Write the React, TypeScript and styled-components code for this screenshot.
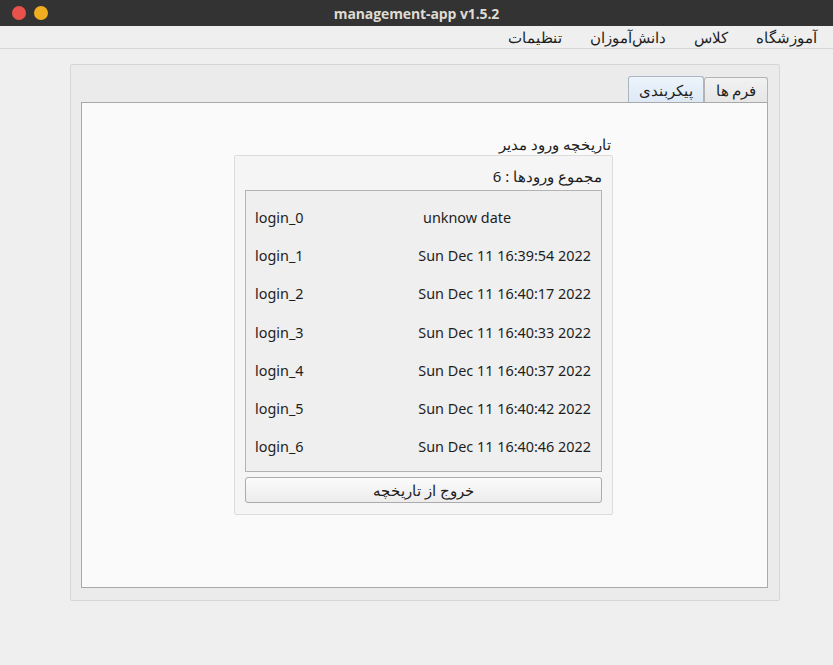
import styled, { createGlobalStyle } from 'styled-components';

const Global = createGlobalStyle`
  html, body { margin: 0; padding: 0; background: #efefef; }
  body { font-family: "Noto Sans", sans-serif; color: #1e1e1e; }
`;

const Window = styled.div`
  width: 833px;
  height: 665px;
  display: flex;
  flex-direction: column;
  background: #efefef;
  overflow: hidden;
`;

const TitleBar = styled.div`
  height: 26px;
  background: #333333;
  display: flex;
  align-items: center;
  position: relative;
  padding-left: 12px;
  gap: 8px;
`;

const Dot = styled.span<{ $color: string }>`
  width: 14px;
  height: 14px;
  border-radius: 50%;
  background: ${p => p.$color};
`;

const Title = styled.div`
  position: absolute;
  left: 0;
  right: 0;
  text-align: center;
  font-family: "Open Sans", "Noto Sans", sans-serif;
  font-weight: 700;
  font-size: 14px;
  color: #dfdbd2;
  letter-spacing: -0.1px;
`;

const MenuBar = styled.div`
  height: 22px;
  border-bottom: 1px solid #d6d6d6;
  display: flex;
  direction: rtl;
  align-items: center;
  padding-right: 2px;
`;

const MenuItem = styled.span`
  padding: 0 14px;
  font-size: 15px;
  line-height: 20px;
`;

const Outer = styled.div`
  box-sizing: border-box;
  margin: 15px 53px 0 70px;
  height: 537px;
  background: #ebebeb;
  border: 1px solid #d6d6d6;
  border-radius: 2px;
  padding: 11px 11px 12px 10px;
  display: flex;
  flex-direction: column;
`;

const TabRow = styled.div`
  display: flex;
  direction: rtl;
  align-items: flex-end;
  height: 26px;
`;

const Tab = styled.div<{ $active?: boolean }>`
  height: ${p => (p.$active ? 26 : 25)}px;
  box-sizing: border-box;
  padding: 0 ${p => (p.$active ? 10 : 10.5)}px;
  display: flex;
  align-items: center;
  font-size: 15px;
  border: 1px solid ${p => (p.$active ? '#a9b6c3' : '#b4b4b4')};
  border-bottom: none;
  border-radius: 3px 3px 0 0;
  background: ${p => (p.$active ? 'linear-gradient(#edf4fb, #dde9f5)' : 'linear-gradient(#f2f2f2, #e6e6e6)')};
  margin-left: ${p => (p.$active ? 2 : 0)}px;
`;

const Pane = styled.div`
  flex: 1;
  background: #fafafa;
  border: 1px solid #a9a9a9;
  display: flex;
  flex-direction: column;
  align-items: center;
  padding-top: 32px;
`;

const Column = styled.div`
  width: 379px;
  margin-right: 2px;
  display: flex;
  flex-direction: column;
`;

const Heading = styled.div`
  direction: rtl;
  font-size: 15px;
  line-height: 18px;
  margin-right: 2px;
  margin-bottom: 2px;
`;

const Group = styled.div`
  background: #f5f5f5;
  border: 1px solid #dcdcdc;
  border-radius: 2px;
  padding: 10px 10px 11px 10px;
  display: flex;
  flex-direction: column;
`;

const Count = styled.div`
  direction: rtl;
  font-size: 15px;
  line-height: 20px;
  margin-bottom: 4px;
`;

const List = styled.div`
  background: #efefef;
  border: 1px solid #b3b3b3;
  padding: 7px 10px 5px 9px;
  display: flex;
  flex-direction: column;
`;

const Row = styled.div`
  height: 38.3px;
  display: flex;
  align-items: center;
  font-size: 14.4px;
`;

const Cell = styled.span`
  flex: 1 1 0;
  white-space: nowrap;
`;

const Button = styled.button`
  margin-top: 5px;
  height: 26px;
  border: 1px solid #ababab;
  border-radius: 3px;
  background: linear-gradient(#fbfbfb, #ececec);
  font-family: "Noto Sans", sans-serif;
  font-size: 15px;
  color: #1e1e1e;
  direction: rtl;
  padding: 0;
`;

const logins = [
  'unknow date',
  'Sun Dec 11 16:39:54 2022',
  'Sun Dec 11 16:40:17 2022',
  'Sun Dec 11 16:40:33 2022',
  'Sun Dec 11 16:40:37 2022',
  'Sun Dec 11 16:40:42 2022',
  'Sun Dec 11 16:40:46 2022',
];

export default function App() {
  return (
    <Window>
      <Global />
      <TitleBar>
        <Dot $color="#e9524a" />
        <Dot $color="#f0ad1f" />
        <Title>management-app v1.5.2</Title>
      </TitleBar>
      <MenuBar>
        <MenuItem>آموزشگاه</MenuItem>
        <MenuItem>کلاس</MenuItem>
        <MenuItem>دانش‌آموزان</MenuItem>
        <MenuItem>تنظیمات</MenuItem>
      </MenuBar>
      <Outer>
        <TabRow>
          <Tab>فرم ها</Tab>
          <Tab $active>پیکربندی</Tab>
        </TabRow>
        <Pane>
          <Column>
            <Heading>تاریخچه ورود مدیر</Heading>
            <Group>
              <Count>مجموع ورودها : 6</Count>
              <List>
                {logins.map((d, i) => (
                  <Row key={i}>
                    <Cell>login_{i}</Cell>
                    <Cell>{d}</Cell>
                  </Row>
                ))}
              </List>
              <Button>خروج از تاریخچه</Button>
            </Group>
          </Column>
        </Pane>
      </Outer>
    </Window>
  );
}
